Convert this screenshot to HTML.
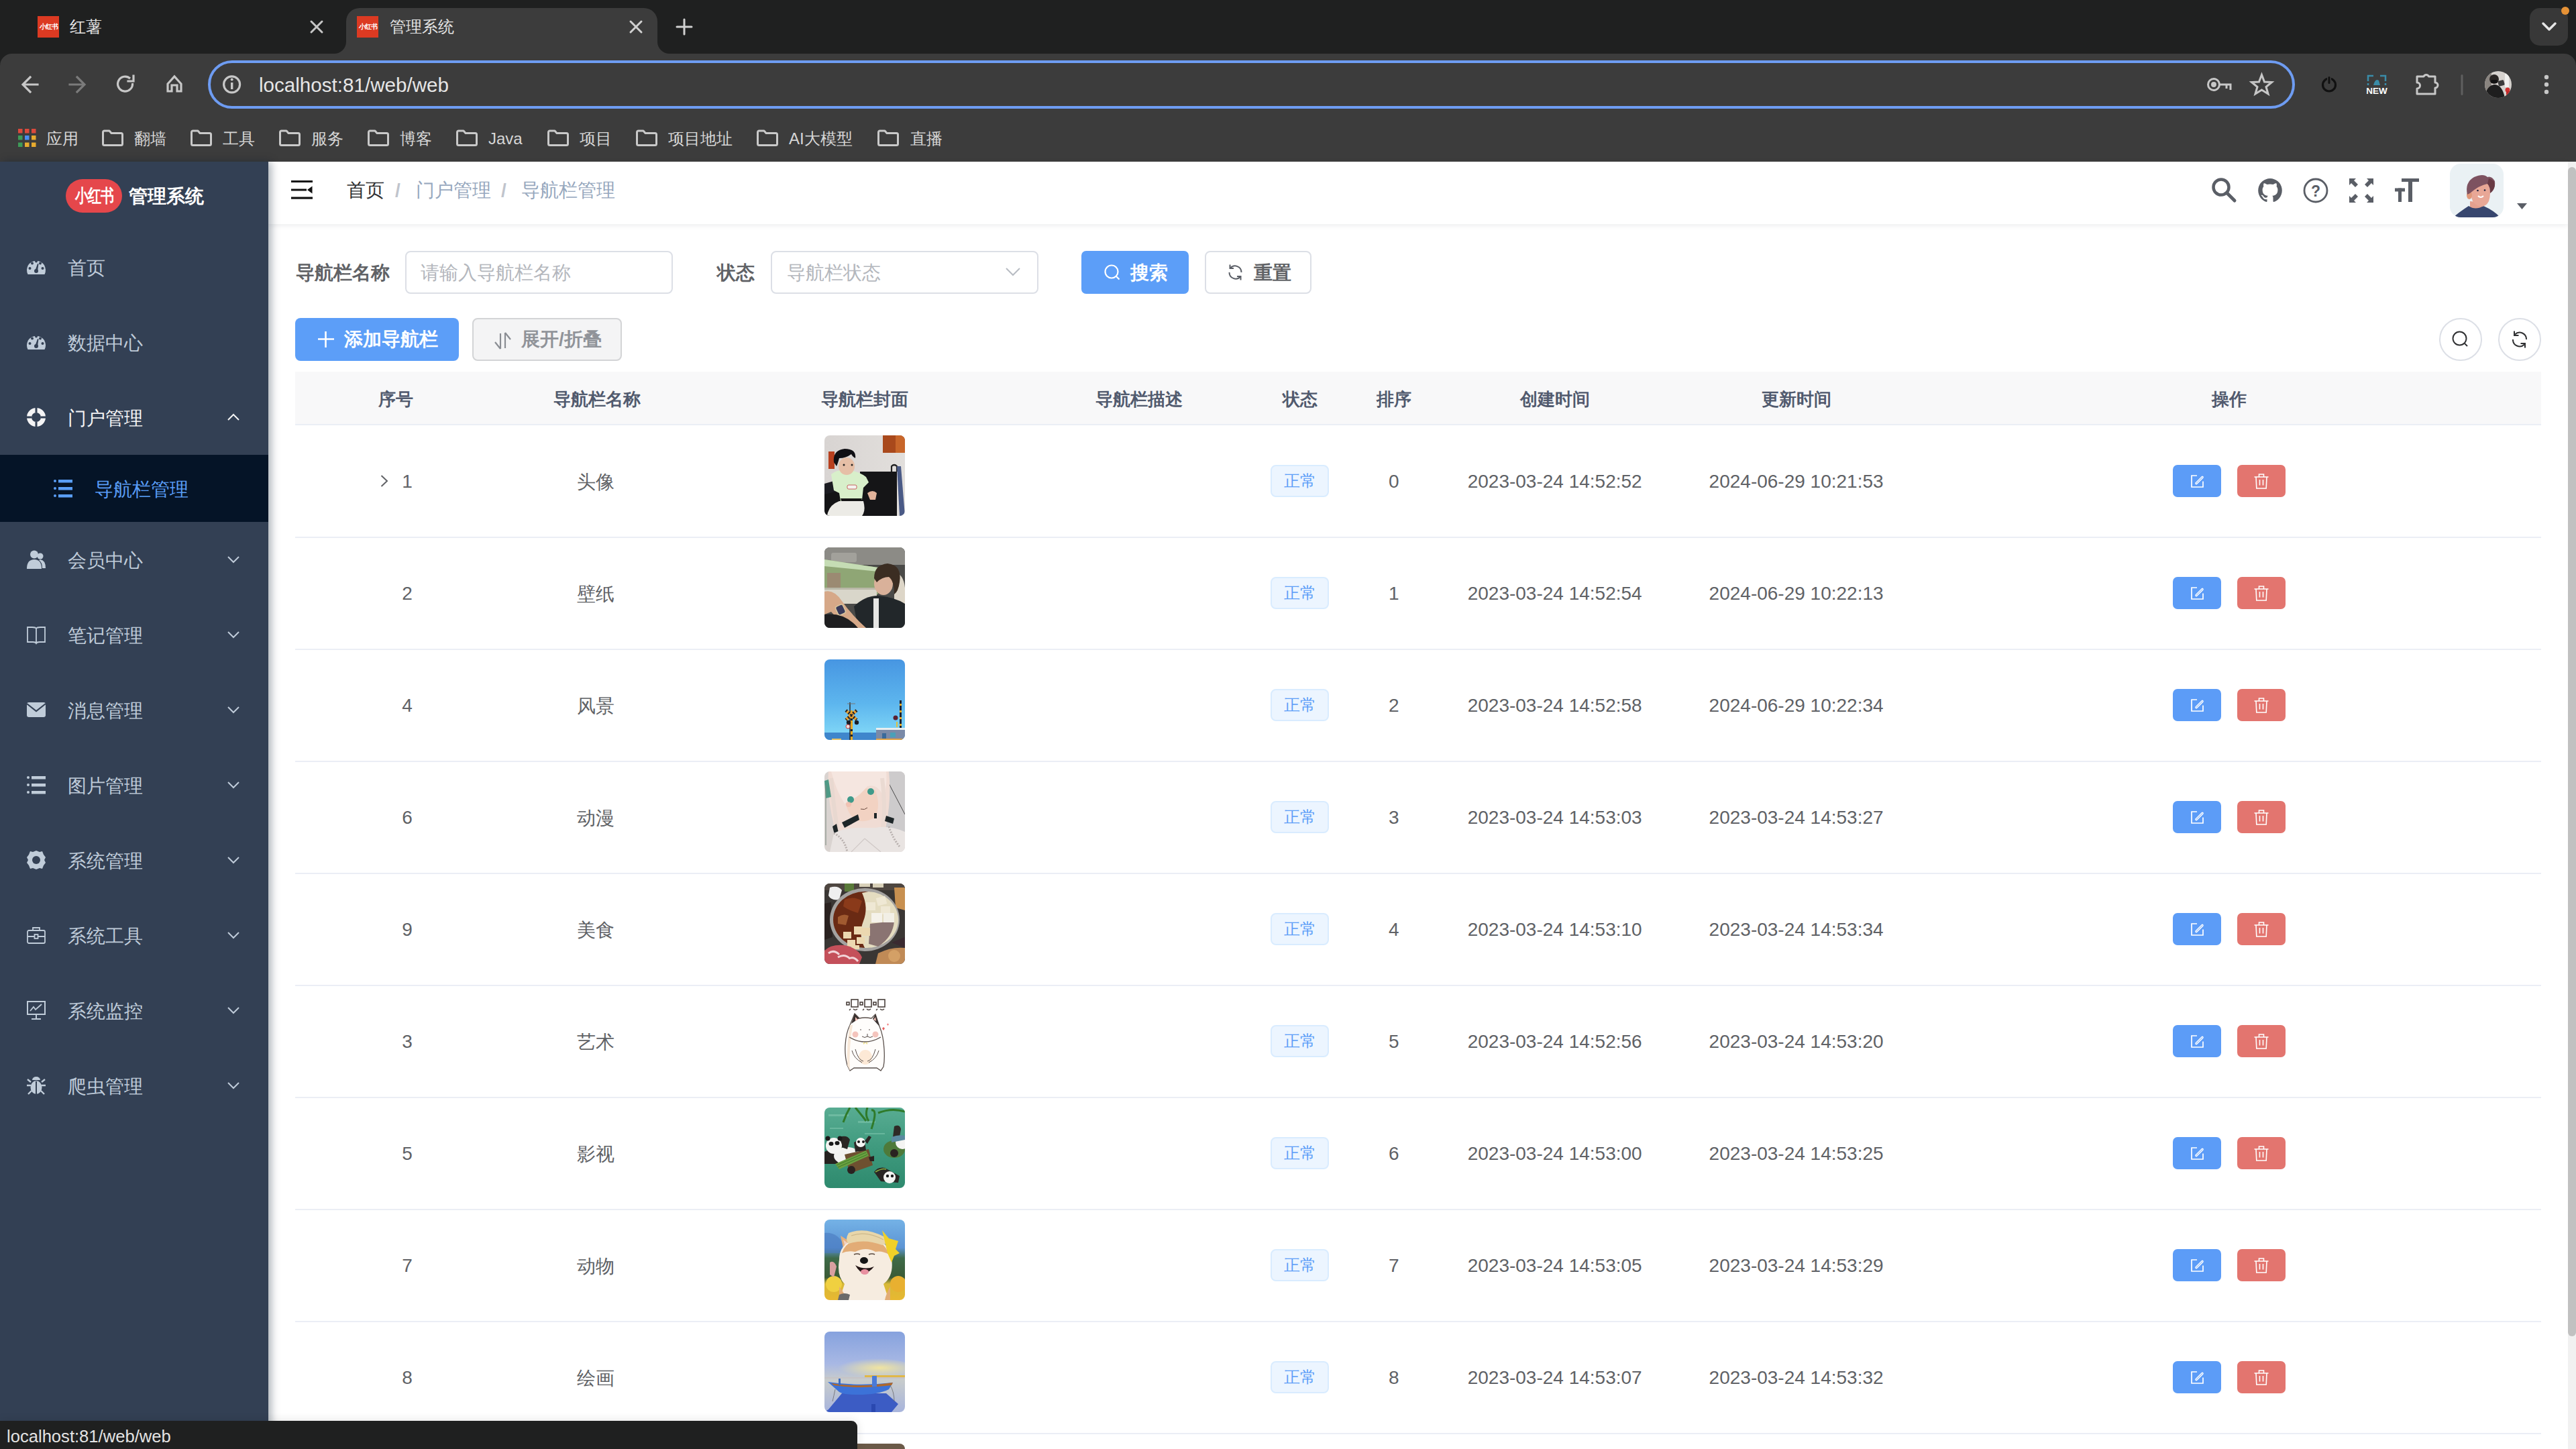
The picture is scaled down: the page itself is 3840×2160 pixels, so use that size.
<!DOCTYPE html>
<html><head><meta charset="utf-8">
<style>
*{box-sizing:border-box;margin:0;padding:0}
html,body{width:3840px;height:2160px;overflow:hidden;background:#fff;font-family:"Liberation Sans",sans-serif}
.a{position:absolute}
.t{position:absolute;white-space:nowrap;line-height:1}
svg{position:absolute;overflow:visible}
/* chrome */
#tabs{left:0;top:0;width:3840px;height:120px;background:#1f2020}
#tool{left:0;top:80px;width:3840px;height:161px;background:#3c3c3c;border-radius:18px 18px 0 0}
.fav{position:absolute;width:32px;height:32px;background:#dc3a22;color:#fff;font-size:10px;font-weight:bold;line-height:32px;text-align:center;letter-spacing:-1px}
.ct{color:#e3e3e3;font-size:24px}
.bm{color:#d6d6d6;font-size:24px;top:194.5px}
/* sidebar */
#side{left:0;top:241px;width:400px;height:1919px;background:#334054;box-shadow:4px 0 12px rgba(0,21,41,.35);z-index:2}
.mi{color:#bfcbd9;font-size:28px}
/* content */
.lbl{font-size:28px;font-weight:bold;color:#606266}
.inp{position:absolute;border:2px solid #dcdfe6;border-radius:8px;background:#fff}
.ph{font-size:28px;color:#b4b7bd}
.th{font-size:26px;font-weight:bold;color:#515a6e}
.td{font-size:28px;color:#606266}
.row{position:absolute;left:440px;width:3348px;height:2px;background:#ebeef5}
.thumb{position:absolute;left:1229px;width:120px;height:120px;border-radius:8px;overflow:hidden}
.tag{position:absolute;left:1894px;width:87px;height:48px;background:#ecf5ff;border:2px solid #d9ecff;border-radius:8px;color:#5b9ef8;font-size:24px;line-height:44px;text-align:center}
.be{position:absolute;left:3239px;width:72px;height:48px;background:#5c9cf7;border-radius:7px}
.bd{position:absolute;left:3335px;width:72px;height:48px;background:#e3756f;border-radius:7px}
</style></head><body>
<!-- ============ BROWSER CHROME ============ -->
<div id="tabs" class="a"></div>
<div id="tool" class="a"></div>

<!-- tab strip -->
<div class="fav" style="left:56px;top:24px">小红书</div>
<div class="t ct" style="left:104px;top:28px">红薯</div>
<svg width="3840" height="80" style="left:0;top:0">
 <g stroke="#c6c6c6" stroke-width="3" stroke-linecap="round">
  <path d="M464,32 L480,48 M480,32 L464,48"/>
 </g>
 <path d="M498,80 A18,18 0 0 0 516,62 V32 A20,20 0 0 1 536,12 H960 A20,20 0 0 1 980,32 V62 A18,18 0 0 0 998,80 Z" fill="#3c3c3c"/>
 <g stroke="#d0d0d0" stroke-width="3" stroke-linecap="round">
  <path d="M940,32 L956,48 M956,32 L940,48"/>
  <path d="M1020,29 V51 M1009,40 H1031"/>
 </g>
 <rect x="3771" y="12" width="57" height="56" rx="15" fill="#383838"/>
 <path d="M3791,35 L3800,44 L3809,35" stroke="#e6e6e6" stroke-width="3.5" fill="none" stroke-linecap="round" stroke-linejoin="round"/>
 <circle cx="3824" cy="16" r="6" fill="#e69236"/>
</svg>
<div class="fav" style="left:532px;top:24px">小红书</div>
<div class="t ct" style="left:581px;top:28px">管理系统</div>
<!-- toolbar -->
<svg width="3840" height="161" style="left:0;top:80px">
 <g stroke="#c7c7c7" stroke-width="3.2" fill="none" stroke-linecap="square">
  <path d="M35,46 H56 M45,35 L34,46 L45,57"/>
 </g>
 <g stroke="#7b7b7b" stroke-width="3.2" fill="none" stroke-linecap="square">
  <path d="M125,46 H104 M115,35 L126,46 L115,57"/>
 </g>
 <g stroke="#c7c7c7" stroke-width="3.2" fill="none">
  <path d="M197.5,44 A11,11 0 1 1 194,37"/>
  <path d="M199,33 V41 H191" stroke-linecap="square"/>
  <path d="M250,56 V45 L260,34 L270,45 V56 H264 V47 H256 V56 Z" stroke-linejoin="miter"/>
  <circle cx="345.6" cy="45.8" r="12"/>
 </g>
 <rect x="344" y="43" width="3.4" height="10" fill="#c7c7c7"/>
 <circle cx="345.7" cy="38.5" r="2" fill="#c7c7c7"/>
 <!-- key -->
 <g stroke="#c7c7c7" stroke-width="3" fill="none">
  <circle cx="3300" cy="46" r="8.5"/>
  <path d="M3308.5,46 H3325 V54 M3319,46 V52"/>
 </g>
 <circle cx="3300" cy="46" r="4" fill="#c7c7c7"/>
 <path d="M3371.5,31.5 L3375.5,42 L3386.5,42.5 L3378,49.5 L3381,60 L3371.5,54 L3362,60 L3365,49.5 L3356.5,42.5 L3367.5,42 Z" stroke="#c7c7c7" stroke-width="3" fill="none" stroke-linejoin="miter"/>
 <!-- power -->
 <circle cx="3472" cy="46.5" r="9.5" stroke="#111" stroke-width="3.2" fill="none"/>
 <rect x="3469" y="33" width="6" height="13" fill="#3c3c3c"/>
 <rect x="3470.5" y="34" width="3" height="11" rx="1.5" fill="#111"/>
 <!-- NEW -->
 <path d="M3530,41 V33 H3538 M3548,33 H3556 V41 M3530,44 V47 M3556,44 V47" stroke="#3a8ca8" stroke-width="2.5" fill="none"/>
 <path d="M3538,47 Q3541,36 3546,40 L3548,47 Z" fill="#3a8ca8"/>
 <text x="3543" y="60" font-family="Liberation Sans" font-weight="bold" font-size="13.5" fill="#fff" text-anchor="middle">NEW</text>
 <!-- puzzle -->
 <path d="M3603,34 H3613 A4,4 0 0 1 3620.5,34 H3630 V43 A4,4 0 0 1 3630,51 V60 H3603 V52 A4.5,4.5 0 0 0 3603,43 Z" stroke="#c7c7c7" stroke-width="3" fill="none" stroke-linejoin="round"/>
 <rect x="3668.5" y="31" width="3" height="31" rx="1.5" fill="#5f5f5f"/>
 <defs><clipPath id="av"><circle cx="3724" cy="46" r="20"/></clipPath></defs>
 <g clip-path="url(#av)"><rect x="3704" y="26" width="40" height="40" fill="#d6d2ce"/><rect x="3704" y="26" width="10" height="40" fill="#8a8580"/><rect x="3734" y="30" width="6" height="20" fill="#f0f0ee"/>
 <path d="M3704,66 Q3706,48 3718,46 Q3730,46 3734,66 Z" fill="#1e1e1e"/><circle cx="3718" cy="38" r="7" fill="#2a2624"/><rect x="3713" y="39" width="10" height="5" rx="2" fill="#111"/>
 <rect x="3724" y="40" width="9" height="8" rx="1.5" fill="#3a3a3a" transform="rotate(-15 3728 44)"/><circle cx="3738" cy="54" r="3.5" fill="#d03030"/><rect x="3736" y="56" width="8" height="10" fill="#c02828"/></g>
 <g fill="#c7c7c7"><circle cx="3796" cy="35" r="3.2"/><circle cx="3796" cy="46" r="3.2"/><circle cx="3796" cy="57" r="3.2"/></g>
</svg>
<div class="a" style="left:310px;top:90px;width:3111px;height:72px;border:4px solid #6e9cf2;border-radius:36px"></div>
<div class="t" style="left:386px;top:112px;font-size:29.6px;color:#e6e6e6">localhost:81/web/web</div>
<!-- bookmarks -->
<svg width="1400" height="40" style="left:0;top:186px">
 <g>
  <rect x="27" y="6" width="6.5" height="6.5" fill="#db4a3c"/><rect x="37" y="6" width="6.5" height="6.5" fill="#db4a3c"/><rect x="47" y="6" width="6.5" height="6.5" fill="#db4a3c"/>
  <rect x="27" y="16" width="6.5" height="6.5" fill="#3e9b58"/><rect x="37" y="16" width="6.5" height="6.5" fill="#4a8df0"/><rect x="47" y="16" width="6.5" height="6.5" fill="#e8ab2e"/>
  <rect x="27" y="26.5" width="6.5" height="6.5" fill="#3e9b58"/><rect x="37" y="26.5" width="6.5" height="6.5" fill="#e8ab2e"/><rect x="47" y="26.5" width="6.5" height="6.5" fill="#e8ab2e"/>
 </g>
 <defs><path id="fd" d="M1.5,8 V3 A2,2 0 0 1 3.5,1 H11 L14,4.5 H28.5 A2,2 0 0 1 30.5,6.5 V20.5 A2,2 0 0 1 28.5,22.5 H3.5 A2,2 0 0 1 1.5,20.5 Z" stroke="#c9c9c9" stroke-width="3" fill="none" stroke-linejoin="round"/></defs>
 <use href="#fd" x="152" y="8"/><use href="#fd" x="284" y="8"/><use href="#fd" x="416" y="8"/><use href="#fd" x="548" y="8"/><use href="#fd" x="680" y="8"/><use href="#fd" x="816" y="8"/><use href="#fd" x="948" y="8"/><use href="#fd" x="1128" y="8"/><use href="#fd" x="1308" y="8"/>
</svg>
<div class="t bm" style="left:69px">应用</div>
<div class="t bm" style="left:200px">翻墙</div>
<div class="t bm" style="left:332px">工具</div>
<div class="t bm" style="left:464px">服务</div>
<div class="t bm" style="left:596px">博客</div>
<div class="t bm" style="left:728px">Java</div>
<div class="t bm" style="left:864px">项目</div>
<div class="t bm" style="left:996px">项目地址</div>
<div class="t bm" style="left:1176px">AI大模型</div>
<div class="t bm" style="left:1357px">直播</div>

<!-- CHROME_END -->
<div id="side" class="a"></div>
<!-- SIDEBAR -->
<div class="a" style="left:98px;top:267px;width:84px;height:50px;background:#e5474b;border-radius:25px;color:#fff;font-weight:bold;font-size:20px;line-height:50px;text-align:center;letter-spacing:-1px;z-index:3"><span style="display:inline-block;transform:scale(1,1.35)">小红书</span></div>
<div class="t" style="left:192px;top:278.5px;font-size:28px;font-weight:bold;color:#fff;z-index:3">管理系统</div>
<div class="t mi" style="left:101px;top:385.5px;color:#bfcbd9;z-index:3">首页</div>
<svg width="28" height="28" style="left:40px;top:384px;z-index:3"><path d="M1.5,25 A14,14 0 1 1 26.5,25 Z" fill="#c0ccd9"/><g fill="#334054"><circle cx="4.5" cy="16" r="2"/><circle cx="8" cy="8.5" r="2"/><circle cx="14" cy="5.5" r="2"/><circle cx="20" cy="8.5" r="2"/><circle cx="23.5" cy="16" r="2"/><path d="M12.5,19 L16,9 L17.5,9.5 L16,20 Z"/><circle cx="14" cy="20" r="3"/></g></svg>
<div class="t mi" style="left:101px;top:497.5px;color:#bfcbd9;z-index:3">数据中心</div>
<svg width="28" height="28" style="left:40px;top:496px;z-index:3"><path d="M1.5,25 A14,14 0 1 1 26.5,25 Z" fill="#c0ccd9"/><g fill="#334054"><circle cx="4.5" cy="16" r="2"/><circle cx="8" cy="8.5" r="2"/><circle cx="14" cy="5.5" r="2"/><circle cx="20" cy="8.5" r="2"/><circle cx="23.5" cy="16" r="2"/><path d="M12.5,19 L16,9 L17.5,9.5 L16,20 Z"/><circle cx="14" cy="20" r="3"/></g></svg>
<div class="t mi" style="left:101px;top:609.5px;color:#f4f4f5;z-index:3">门户管理</div>
<svg width="28" height="28" style="left:40px;top:608px;z-index:3"><circle cx="14" cy="14" r="10.5" stroke="#f4f4f5" stroke-width="7" fill="none"/><g stroke="#334054" stroke-width="3"><path d="M14,0 V7 M14,21 V28 M0,14 H7 M21,14 H28"/></g></svg>
<svg width="18" height="10" style="left:339px;top:617px;z-index:3"><path d="M1,9 L9,1 L17,9" stroke="#f4f4f5" stroke-width="2" fill="none"/></svg>
<div class="t mi" style="left:101px;top:821.5px;color:#bfcbd9;z-index:3">会员中心</div>
<svg width="28" height="28" style="left:40px;top:820px;z-index:3"><circle cx="11" cy="6.5" r="6" fill="#c0ccd9"/><path d="M0,28 Q0,14 11,14 Q22,14 22,28 Z" fill="#c0ccd9"/><circle cx="20" cy="9" r="4.5" fill="#c0ccd9"/><path d="M20,14 Q28,15 28,27 H23 Q23,18 18,15 Z" fill="#c0ccd9"/></svg>
<svg width="18" height="10" style="left:339px;top:829px;z-index:3"><path d="M1,1 L9,9 L17,1" stroke="#bfcbd9" stroke-width="2" fill="none"/></svg>
<div class="t mi" style="left:101px;top:933.5px;color:#bfcbd9;z-index:3">笔记管理</div>
<svg width="28" height="28" style="left:40px;top:932px;z-index:3"><path d="M1,3 H8 Q13,3 14,5 Q15,3 20,3 H27 V25 H19 Q15,25 14,27 Q13,25 9,25 H1 Z M14,5 V27" stroke="#c0ccd9" stroke-width="1.8" fill="none"/></svg>
<svg width="18" height="10" style="left:339px;top:941px;z-index:3"><path d="M1,1 L9,9 L17,1" stroke="#bfcbd9" stroke-width="2" fill="none"/></svg>
<div class="t mi" style="left:101px;top:1045.5px;color:#bfcbd9;z-index:3">消息管理</div>
<svg width="28" height="28" style="left:40px;top:1044px;z-index:3"><rect x="0" y="3" width="28" height="22" rx="3" fill="#c0ccd9"/><path d="M0,5 L14,16 L28,5" stroke="#334054" stroke-width="2.2" fill="none"/></svg>
<svg width="18" height="10" style="left:339px;top:1053px;z-index:3"><path d="M1,1 L9,9 L17,1" stroke="#bfcbd9" stroke-width="2" fill="none"/></svg>
<div class="t mi" style="left:101px;top:1157.5px;color:#bfcbd9;z-index:3">图片管理</div>
<svg width="28" height="28" style="left:40px;top:1156px;z-index:3"><g fill="#c0ccd9"><circle cx="2" cy="3" r="2"/><circle cx="2" cy="14" r="2"/><circle cx="2" cy="25" r="2"/><rect x="7" y="1" width="21" height="4.5"/><rect x="7" y="12" width="21" height="4.5"/><rect x="7" y="23" width="21" height="4.5"/></g></svg>
<svg width="18" height="10" style="left:339px;top:1165px;z-index:3"><path d="M1,1 L9,9 L17,1" stroke="#bfcbd9" stroke-width="2" fill="none"/></svg>
<div class="t mi" style="left:101px;top:1269.5px;color:#bfcbd9;z-index:3">系统管理</div>
<svg width="28" height="28" style="left:40px;top:1268px;z-index:3"><path d="M14,0 L19,2 L23,1 L25,6 L28,10 L26,14 L28,18 L25,22 L23,27 L19,26 L14,28 L9,26 L5,27 L3,22 L0,18 L2,14 L0,10 L3,6 L5,1 L9,2 Z" fill="#c0ccd9"/><circle cx="14" cy="14" r="6" fill="#334054"/></svg>
<svg width="18" height="10" style="left:339px;top:1277px;z-index:3"><path d="M1,1 L9,9 L17,1" stroke="#bfcbd9" stroke-width="2" fill="none"/></svg>
<div class="t mi" style="left:101px;top:1381.5px;color:#bfcbd9;z-index:3">系统工具</div>
<svg width="28" height="28" style="left:40px;top:1380px;z-index:3"><rect x="1" y="7" width="26" height="19" rx="2" stroke="#c0ccd9" stroke-width="1.8" fill="none"/><path d="M9,7 V3 H19 V7 M1,16 H27" stroke="#c0ccd9" stroke-width="1.8" fill="none"/><rect x="11.5" y="13" width="5" height="6" stroke="#c0ccd9" stroke-width="1.8" fill="#334054"/></svg>
<svg width="18" height="10" style="left:339px;top:1389px;z-index:3"><path d="M1,1 L9,9 L17,1" stroke="#bfcbd9" stroke-width="2" fill="none"/></svg>
<div class="t mi" style="left:101px;top:1493.5px;color:#bfcbd9;z-index:3">系统监控</div>
<svg width="28" height="28" style="left:40px;top:1492px;z-index:3"><path d="M1,1 H27 V20 H1 Z M14,20 V26 M7,27 H21" stroke="#c0ccd9" stroke-width="2" fill="none"/><path d="M5,15 L10,9 L13,13 L22,5" stroke="#c0ccd9" stroke-width="1.8" fill="none"/></svg>
<svg width="18" height="10" style="left:339px;top:1501px;z-index:3"><path d="M1,1 L9,9 L17,1" stroke="#bfcbd9" stroke-width="2" fill="none"/></svg>
<div class="t mi" style="left:101px;top:1605.5px;color:#bfcbd9;z-index:3">爬虫管理</div>
<svg width="28" height="28" style="left:40px;top:1604px;z-index:3"><ellipse cx="14" cy="17" rx="8.5" ry="10" fill="#c0ccd9"/><path d="M8,6 A6,5 0 0 1 20,6 Z" fill="#c0ccd9"/><g stroke="#c0ccd9" stroke-width="2.4"><path d="M0,14 H6 M22,14 H28 M1,5 L6,9 M27,5 L22,9 M2,27 L7,22 M26,27 L21,22"/></g><path d="M14,8 V28" stroke="#334054" stroke-width="2"/></svg>
<svg width="18" height="10" style="left:339px;top:1613px;z-index:3"><path d="M1,1 L9,9 L17,1" stroke="#bfcbd9" stroke-width="2" fill="none"/></svg>
<div class="a" style="left:0;top:678px;width:400px;height:100px;background:#051427;z-index:3"></div>
<svg width="28" height="28" style="left:80px;top:714px;z-index:3"><g fill="#5a9ef7"><circle cx="2" cy="3" r="2"/><circle cx="2" cy="14" r="2"/><circle cx="2" cy="25" r="2"/><rect x="7" y="1" width="21" height="4.5"/><rect x="7" y="12" width="21" height="4.5"/><rect x="7" y="23" width="21" height="4.5"/></g></svg>
<div class="t mi" style="left:141px;top:715.5px;color:#5a9ef7;z-index:3">导航栏管理</div>
<!-- SIDEBAR_END -->

<!-- NAVBAR -->
<div class="a" style="left:400px;top:241px;width:3428px;height:93px;background:#fff;box-shadow:0 2px 8px rgba(0,21,41,.08);z-index:1"></div>
<svg width="34" height="30" style="left:434px;top:268px;z-index:1">
 <rect x="0" y="1" width="32" height="3" fill="#111"/><rect x="0" y="13.5" width="23" height="3" fill="#111"/><rect x="0" y="25.5" width="32" height="3.2" fill="#111"/>
 <path d="M24,15 L31.5,9.5 V20.5 Z" fill="#111"/>
</svg>
<div class="t" style="left:517px;top:270px;font-size:28px;color:#303133;z-index:1">首页</div>
<div class="t" style="left:589px;top:270px;font-size:28px;color:#c0c4cc;font-weight:bold;z-index:1">/</div>
<div class="t" style="left:620px;top:270px;font-size:28px;color:#97a8be;z-index:1">门户管理</div>
<div class="t" style="left:747px;top:270px;font-size:28px;color:#c0c4cc;font-weight:bold;z-index:1">/</div>
<div class="t" style="left:777px;top:270px;font-size:28px;color:#97a8be;z-index:1">导航栏管理</div>
<svg width="320" height="40" style="left:3296px;top:264px;z-index:1">
 <g stroke="#5a5e66" fill="none">
  <circle cx="15" cy="15" r="11.5" stroke-width="4.5"/>
  <path d="M23.5,23.5 L35,35" stroke-width="5" stroke-linecap="round"/>
  <circle cx="156" cy="20" r="17" stroke-width="2.8"/>
 </g>
 <path d="M88,2 A18,18 0 0 0 82.3,37 C83.2,37.2 83.5,36.6 83.5,36.1 V33 C78.5,34 77.4,30.6 77.4,30.6 C76.6,28.5 75.4,27.9 75.4,27.9 C73.7,26.8 75.5,26.8 75.5,26.8 C77.3,26.9 78.3,28.7 78.3,28.7 C79.9,31.5 82.6,30.7 83.6,30.2 C83.8,29 84.3,28.2 84.8,27.8 C80.8,27.3 76.6,25.8 76.6,18.9 C76.6,16.9 77.3,15.3 78.4,14 C78.3,13.6 77.6,11.7 78.6,9.3 C78.6,9.3 80.1,8.8 83.6,11.1 A17,17 0 0 1 92.4,11.1 C95.9,8.8 97.4,9.3 97.4,9.3 C98.4,11.7 97.7,13.6 97.6,14 C98.7,15.3 99.4,16.9 99.4,18.9 C99.4,25.8 95.2,27.3 91.2,27.8 C91.9,28.4 92.5,29.5 92.5,31.2 V36.1 C92.5,36.6 92.8,37.2 93.7,37 A18,18 0 0 0 88,2 Z" fill="#5a5e66"/>
 <text x="156" y="28.5" font-family="Liberation Sans" font-weight="bold" font-size="23" fill="#5a5e66" text-anchor="middle">?</text>
 <g fill="#5a5e66">
  <path d="M206,2 H216 L213,5 L219,11 L215,15 L209,9 L206,12 Z"/>
  <path d="M242,2 H232 L235,5 L229,11 L233,15 L239,9 L242,12 Z"/>
  <path d="M206,38 H216 L213,35 L219,29 L215,25 L209,31 L206,28 Z"/>
  <path d="M242,38 H232 L235,35 L229,29 L233,25 L239,31 L242,28 Z"/>
  <rect x="284" y="2" width="26" height="5"/><rect x="294" y="2" width="6" height="35"/>
  <rect x="274" y="16.5" width="15" height="5"/><rect x="279" y="16.5" width="5" height="20.5"/>
 </g>
</svg>
<!-- avatar -->
<div class="a" style="left:3652px;top:244px;width:80px;height:80px;border-radius:16px;background:#eaf1f4;overflow:hidden;z-index:1">
 <svg width="80" height="80" style="left:0;top:0">
  <path d="M30,56 L48,58 L50,68 Q40,74 30,68 Z" fill="#e4a08e"/>
  <path d="M5,80 Q14,72 28,63 Q38,70 50,63 Q66,70 75,80 Z" fill="#37466e"/>
  <path d="M32,34 Q44,22 58,30 Q62,44 58,56 Q54,64 46,64 Q38,62 34,56 Q30,46 32,34 Z" fill="#e8a796"/>
  <ellipse cx="29" cy="47" rx="4" ry="6" fill="#e0987a"/>
  <path d="M26,46 Q22,28 36,20 Q50,14 56,20 Q62,18 67,26 Q68,34 64,40 L61,42 Q60,32 56,30 Q44,32 30,44 Z" fill="#7d5260"/>
  <path d="M58,22 Q67,24 67,32 Q66,40 60,44 Q60,34 56,30 Z" fill="#683a44"/>
  <circle cx="41.5" cy="40" r="1.3" fill="#1a2040"/><circle cx="52" cy="39.5" r="1.3" fill="#1a2040"/>
  <path d="M42,48 Q46,52 50,48" stroke="#fff" stroke-width="2" fill="none"/>
 </svg>
</div>
<svg width="16" height="10" style="left:3752px;top:302px;z-index:1"><path d="M0,1 H15 L7.5,10 Z" fill="#5a5e66"/></svg>
<!-- scrollbar -->
<div class="a" style="left:3828px;top:241px;width:12px;height:1919px;background:#f1f1f1;z-index:1"></div>
<div class="a" style="left:3828px;top:249px;width:12px;height:1743px;background:#c1c1c1;border-radius:6px;z-index:1"></div>
<!-- SEARCH FORM -->
<div class="t lbl" style="left:441px;top:393px">导航栏名称</div>
<div class="inp" style="left:604px;top:374px;width:399px;height:64px"></div>
<div class="t ph" style="left:627px;top:393px">请输入导航栏名称</div>
<div class="t lbl" style="left:1069px;top:393px">状态</div>
<div class="inp" style="left:1149px;top:374px;width:399px;height:64px"></div>
<div class="t ph" style="left:1173px;top:393px">导航栏状态</div>
<svg width="22" height="14" style="left:1499px;top:399px"><path d="M1,1 L11,11 L21,1" stroke="#b8bcc3" stroke-width="2" fill="none"/></svg>
<div class="a" style="left:1612px;top:374px;width:160px;height:64px;background:#5c9ef8;border-radius:7px"></div>
<svg width="26" height="26" style="left:1646px;top:394px"><circle cx="11" cy="11" r="9.5" stroke="#fff" stroke-width="2.2" fill="none"/><path d="M18,18 L22.5,22.5" stroke="#fff" stroke-width="2.2"/></svg>
<div class="t" style="left:1685px;top:393px;font-size:28px;font-weight:bold;color:#fff">搜索</div>
<div class="inp" style="left:1796px;top:374px;width:159px;height:64px;border-color:#dcdfe6"></div>
<svg width="26" height="26" style="left:1830px;top:394px"><g transform="translate(23,0) scale(-1,1)"><path d="M2.5,12 A9.5,9.5 0 0 1 19,5.5 M20.5,12 A9.5,9.5 0 0 1 4,18.5" stroke="#5a5e66" stroke-width="2" fill="none"/><path d="M19.5,0.5 V6 H14 M3.5,23.5 V18 H9" stroke="#5a5e66" stroke-width="2" fill="none"/></g></svg>
<div class="t" style="left:1869px;top:393px;font-size:28px;font-weight:bold;color:#606266">重置</div>
<!-- TOOLBAR BUTTONS -->
<div class="a" style="left:440px;top:474px;width:244px;height:64px;background:#5c9ef8;border-radius:8px"></div>
<svg width="24" height="24" style="left:474px;top:494px"><path d="M11.5,0 V24 M0,11.5 H24" stroke="#fff" stroke-width="2.6"/></svg>
<div class="t" style="left:513px;top:492px;font-size:28px;font-weight:bold;color:#fff">添加导航栏</div>
<div class="a" style="left:704px;top:474px;width:223px;height:64px;background:#f4f4f5;border:2px solid #d3d4d6;border-radius:8px"></div>
<svg width="26" height="26" style="left:737px;top:495px"><path d="M9,25 V2 M9,25 L1,15 M16,1 V24 M16,1 L24,11" stroke="#8a8d93" stroke-width="2.2" fill="none"/></svg>
<div class="t" style="left:777px;top:492px;font-size:28px;font-weight:bold;color:#909399">展开/折叠</div>
<div class="a" style="left:3636px;top:474px;width:64px;height:64px;border:2px solid #dcdfe6;border-radius:32px"></div>
<svg width="26" height="26" style="left:3655px;top:493px"><circle cx="11.5" cy="11.5" r="10" stroke="#303133" stroke-width="2" fill="none"/><path d="M19,19 L23,23" stroke="#303133" stroke-width="2"/></svg>
<div class="a" style="left:3724px;top:474px;width:64px;height:64px;border:2px solid #dcdfe6;border-radius:32px"></div>
<svg width="26" height="26" style="left:3743px;top:493px"><g transform="translate(26,0) scale(-1,1)"><path d="M3,13 A10,10 0 0 1 20,5.5 M23,13 A10,10 0 0 1 6,20.5" stroke="#303133" stroke-width="2" fill="none"/><path d="M21,0.5 V7 H14.5 M5,25.5 V19 H11.5" stroke="#303133" stroke-width="2" fill="none"/></g></svg>
<!-- TABLE HEADER -->
<div class="a" style="left:440px;top:554px;width:3348px;height:79px;background:#f8f8f9"></div>
<div class="row" style="top:632px"></div>
<div class="t th" style="left:290px;width:600px;text-align:center;top:581.5px">序号</div>
<div class="t th" style="left:590px;width:600px;text-align:center;top:581.5px">导航栏名称</div>
<div class="t th" style="left:989px;width:600px;text-align:center;top:581.5px">导航栏封面</div>
<div class="t th" style="left:1397.5px;width:600px;text-align:center;top:581.5px">导航栏描述</div>
<div class="t th" style="left:1638px;width:600px;text-align:center;top:581.5px">状态</div>
<div class="t th" style="left:1777.6999999999998px;width:600px;text-align:center;top:581.5px">排序</div>
<div class="t th" style="left:2017.6999999999998px;width:600px;text-align:center;top:581.5px">创建时间</div>
<div class="t th" style="left:2377.6px;width:600px;text-align:center;top:581.5px">更新时间</div>
<div class="t th" style="left:3023px;width:600px;text-align:center;top:581.5px">操作</div>

<!-- HEADER_END -->
<!-- TABLE ROWS -->
<div class="row" style="top:799.6px"></div>
<svg width="12" height="18" style="left:567px;top:708px"><path d="M1.5,1 L10,9 L1.5,17" stroke="#606266" stroke-width="2" fill="none"/></svg>
<div class="t td" style="left:507px;width:200px;text-align:center;top:704px">1</div>
<div class="t td" style="left:588px;width:600px;text-align:center;top:704.5px">头像</div>
<div class="thumb" style="top:649.4px"><svg width="120" height="120" style="left:0;top:0"><defs><linearGradient id="w1" x1="0" y1="0" x2="1" y2="0"><stop offset="0" stop-color="#d8d4d2"/><stop offset="1" stop-color="#e2dfdc"/></linearGradient></defs>
<rect width="120" height="120" fill="url(#w1)"/><rect x="87" y="0" width="33" height="26" fill="#a9491c"/><rect x="106" y="0" width="14" height="26" fill="#c8662a"/>
<rect x="6" y="24" width="9" height="26" fill="#b8401f"/>
<path d="M53,54 H108 V120 H53 Z" fill="#151517"/><path d="M0,80 H60 V120 H0 Z" fill="#141416"/>
<path d="M100,54 V46 Q104,42 108,46 V54" stroke="#222" stroke-width="2.2" fill="none"/>
<path d="M108,46 L114,46 L120,120 H112 Z" fill="#4a5a86"/>
<path d="M0,72 L14,68 L16,84 L0,88 Z" fill="#1c1c22"/>
<path d="M10,58 Q20,50 36,52 Q52,54 62,62 L66,70 L58,78 L56,96 L24,98 L22,86 L14,82 Z" fill="#d8efca"/>
<rect x="34" y="74" width="14" height="6" rx="2" fill="#f4f4f0" stroke="#c04040" stroke-width="0.8"/>
<path d="M24,94 H56 L54,100 H26 Z" fill="#151515"/>
<path d="M22,98 H58 Q62,112 56,120 H4 Q6,104 22,98 Z" fill="#ecebe6"/>
<path d="M64,86 Q72,80 78,86 L76,96 L68,96 Z" fill="#e2b29a"/>
<ellipse cx="33" cy="46" rx="12" ry="13" fill="#e6bfa6"/>
<path d="M14,40 Q12,22 30,20 Q48,20 46,34 Q42,32 40,28 Q32,34 22,34 Q20,42 18,46 Z" fill="#101014"/>
<circle cx="29" cy="44" r="1.5" fill="#222"/><circle cx="41" cy="44" r="1.5" fill="#222"/></svg></div>
<div class="tag" style="top:693px">正常</div>
<div class="t td" style="left:1977.7px;width:200px;text-align:center;top:704px">0</div>
<div class="t td" style="left:2017.7px;width:600px;text-align:center;top:704px">2023-03-24 14:52:52</div>
<div class="t td" style="left:2377.6px;width:600px;text-align:center;top:704px">2024-06-29 10:21:53</div>
<div class="be" style="top:693px"><svg width="20" height="20" style="left:27px;top:14.5px"><path d="M9,1 H1 V18 H18 V9.5" stroke="#fff" stroke-width="1.7" fill="none"/><path d="M8,12.5 L17,3.5" stroke="#fff" stroke-width="3.6" stroke-linecap="round"/><path d="M8,12.5 L17,3.5" stroke="#5c9cf7" stroke-width="1" stroke-linecap="round"/></svg></div>
<div class="bd" style="top:693px"><svg width="22" height="24" style="left:25px;top:13px"><path d="M0.5,5 H21.5 M7.5,4.5 V1 H14.5 V4.5 M3,5 L3.8,22 H18.2 L19,5 M8.5,9 V17.5 M13.5,9 V17.5" stroke="#fff" stroke-width="1.6" fill="none"/></svg></div>
<div class="row" style="top:966.6px"></div>
<div class="t td" style="left:507px;width:200px;text-align:center;top:871px">2</div>
<div class="t td" style="left:588px;width:600px;text-align:center;top:871.5px">壁纸</div>
<div class="thumb" style="top:816.4px"><svg width="120" height="120" style="left:0;top:0"><rect width="120" height="120" fill="#4a4a48"/><rect x="0" y="0" width="120" height="26" fill="#8c8b86"/><rect x="10" y="8" width="38" height="14" rx="3" fill="#a2a19b"/>
<path d="M0,18 L80,30 V70 H0 Z" fill="#8fa675"/><path d="M0,18 L80,30 V36 L0,28 Z" fill="#c5dcb4"/><rect x="4" y="38" width="20" height="22" fill="#9b8a72"/>
<path d="M0,60 H78 V84 H0 Z" fill="#d9d6ca"/><path d="M0,60 H78 V63 H0 Z" fill="#b9b8a8"/>
<path d="M104,36 Q118,40 120,60 V84 H104 Z" fill="#ddd6c8"/>
<path d="M44,88 Q60,72 80,72 Q104,74 120,84 V120 H50 Z" fill="#22272a"/><rect x="73" y="76" width="8" height="44" fill="#e6e6e4"/>
<ellipse cx="88" cy="54" rx="14" ry="17" fill="#d9b19a"/><path d="M74,46 Q74,26 94,24 Q116,26 112,52 Q110,66 104,70 Q104,50 96,44 Q86,44 78,52 Z" fill="#3b2d22"/>
<path d="M0,66 Q14,62 26,80 Q40,100 62,120 H40 Q20,108 10,96 L0,100 Z" fill="#d6a888"/><rect x="18" y="86" width="12" height="14" rx="3" fill="#3a3a5a" stroke="#d8c8a0" stroke-width="1.5" transform="rotate(-25 24 93)"/>
<path d="M0,100 Q30,96 50,120 H0 Z" fill="#1e1e20"/></svg></div>
<div class="tag" style="top:860px">正常</div>
<div class="t td" style="left:1977.7px;width:200px;text-align:center;top:871px">1</div>
<div class="t td" style="left:2017.7px;width:600px;text-align:center;top:871px">2023-03-24 14:52:54</div>
<div class="t td" style="left:2377.6px;width:600px;text-align:center;top:871px">2024-06-29 10:22:13</div>
<div class="be" style="top:860px"><svg width="20" height="20" style="left:27px;top:14.5px"><path d="M9,1 H1 V18 H18 V9.5" stroke="#fff" stroke-width="1.7" fill="none"/><path d="M8,12.5 L17,3.5" stroke="#fff" stroke-width="3.6" stroke-linecap="round"/><path d="M8,12.5 L17,3.5" stroke="#5c9cf7" stroke-width="1" stroke-linecap="round"/></svg></div>
<div class="bd" style="top:860px"><svg width="22" height="24" style="left:25px;top:13px"><path d="M0.5,5 H21.5 M7.5,4.5 V1 H14.5 V4.5 M3,5 L3.8,22 H18.2 L19,5 M8.5,9 V17.5 M13.5,9 V17.5" stroke="#fff" stroke-width="1.6" fill="none"/></svg></div>
<div class="row" style="top:1133.6px"></div>
<div class="t td" style="left:507px;width:200px;text-align:center;top:1038px">4</div>
<div class="t td" style="left:588px;width:600px;text-align:center;top:1038.5px">风景</div>
<div class="thumb" style="top:983.4px"><svg width="120" height="120" style="left:0;top:0"><defs><linearGradient id="g3" x1="0" y1="0" x2="0" y2="1"><stop offset="0" stop-color="#4796e2"/><stop offset=".55" stop-color="#5db6ee"/><stop offset="1" stop-color="#86dcf8"/></linearGradient></defs>
<rect width="120" height="120" fill="url(#g3)"/><rect x="0" y="109" width="120" height="11" fill="#3f86cc"/>
<path d="M38,64 V120" stroke="#2a2a2a" stroke-width="1.5"/><path d="M34,66 H46" stroke="#777" stroke-width="1"/><rect x="39" y="76" width="3" height="44" fill="#e8a820"/><rect x="39" y="80" width="3" height="3" fill="#222"/><rect x="39" y="88" width="3" height="3" fill="#222"/><rect x="39" y="104" width="3" height="3" fill="#222"/><rect x="39" y="112" width="3" height="3" fill="#222"/>
<path d="M32,76 L48,90 M48,76 L32,90" stroke="#e8a030" stroke-width="4.5"/><path d="M32,76 L48,90 M48,76 L32,90" stroke="#1a2030" stroke-width="4.5" stroke-dasharray="2 3"/>
<circle cx="36" cy="94" r="3.2" fill="#1a1e28"/><circle cx="48" cy="94" r="3.2" fill="#1a1e28"/><circle cx="35" cy="100" r="3" fill="#f0e0e0" stroke="#c84040" stroke-width="1"/>
<rect x="112" y="61" width="3" height="59" fill="#1a2030"/><rect x="112" y="66" width="3" height="3" fill="#e8a820"/><rect x="112" y="76" width="3" height="3" fill="#e8a820"/><rect x="112" y="86" width="3" height="3" fill="#e8a820"/><rect x="112" y="96" width="3" height="3" fill="#e8a820"/><rect x="112" y="106" width="3" height="3" fill="#e8a820"/>
<circle cx="106" cy="87" r="3.5" fill="#5a2030"/><rect x="107" y="93" width="2" height="8" fill="#e0c040"/>
<rect x="77" y="103" width="43" height="17" fill="#7a8aa8"/><rect x="77" y="102" width="43" height="3" fill="#e8eef0"/><rect x="86" y="110" width="6" height="10" fill="#3a6a9a"/><rect x="98" y="109" width="8" height="7" fill="#4aa0b8"/><rect x="77" y="118" width="43" height="2" fill="#e0a040"/>
<rect x="11" y="118" width="14" height="2" fill="#e8c060"/></svg></div>
<div class="tag" style="top:1027px">正常</div>
<div class="t td" style="left:1977.7px;width:200px;text-align:center;top:1038px">2</div>
<div class="t td" style="left:2017.7px;width:600px;text-align:center;top:1038px">2023-03-24 14:52:58</div>
<div class="t td" style="left:2377.6px;width:600px;text-align:center;top:1038px">2024-06-29 10:22:34</div>
<div class="be" style="top:1027px"><svg width="20" height="20" style="left:27px;top:14.5px"><path d="M9,1 H1 V18 H18 V9.5" stroke="#fff" stroke-width="1.7" fill="none"/><path d="M8,12.5 L17,3.5" stroke="#fff" stroke-width="3.6" stroke-linecap="round"/><path d="M8,12.5 L17,3.5" stroke="#5c9cf7" stroke-width="1" stroke-linecap="round"/></svg></div>
<div class="bd" style="top:1027px"><svg width="22" height="24" style="left:25px;top:13px"><path d="M0.5,5 H21.5 M7.5,4.5 V1 H14.5 V4.5 M3,5 L3.8,22 H18.2 L19,5 M8.5,9 V17.5 M13.5,9 V17.5" stroke="#fff" stroke-width="1.6" fill="none"/></svg></div>
<div class="row" style="top:1300.6px"></div>
<div class="t td" style="left:507px;width:200px;text-align:center;top:1205px">6</div>
<div class="t td" style="left:588px;width:600px;text-align:center;top:1205.5px">动漫</div>
<div class="thumb" style="top:1150.4px"><svg width="120" height="120" style="left:0;top:0"><rect width="120" height="120" fill="#d9d3d0"/><rect x="92" y="0" width="28" height="90" fill="#cdcbcc"/><path d="M96,18 L120,64" stroke="#4a4a4a" stroke-width="1"/>
<path d="M6,0 H96 Q100,40 92,80 L80,120 H20 L14,80 Q4,40 6,0 Z" fill="#f0dcd4"/>
<path d="M30,30 Q50,20 76,28 Q84,50 76,68 Q60,78 46,72 Q30,60 30,30 Z" fill="#f2d2c2"/>
<path d="M10,0 H92 Q94,20 88,38 Q80,18 64,22 Q50,40 30,48 Q18,30 10,0 Z" fill="#f5e6e0"/>
<path d="M10,10 Q14,60 22,100" stroke="#e8d8d0" stroke-width="6" fill="none"/><path d="M86,10 Q92,60 86,90" stroke="#eadad2" stroke-width="6" fill="none"/>
<ellipse cx="39" cy="42" rx="5" ry="5" fill="#3f9a8a"/><ellipse cx="69" cy="30" rx="5" ry="5" fill="#3f9a8a"/><circle cx="36" cy="49" r="4" fill="#f0b8a8" opacity=".6"/>
<path d="M54,56 Q60,58 64,54" stroke="#6a4a40" stroke-width="1" fill="none"/>
<path d="M26,76 L50,64 L52,72 L30,84 Z" fill="#1e2628"/><path d="M12,82 L18,78 L22,96 L16,98 Z" fill="#1e2628"/><path d="M92,66 L104,70 L102,78 L90,74 Z" fill="#1e2628"/><path d="M74,62 L78,62 L78,70 L74,70 Z" fill="#1e2628"/>
<path d="M8,120 L14,92 Q30,84 50,84 H76 Q96,80 120,90 V120 Z" fill="#e9e4e2"/><path d="M14,92 Q30,100 34,120 M96,82 Q102,100 112,112" stroke="#b8b0ae" stroke-width="3" fill="none" stroke-dasharray="2 2"/>
<path d="M60,100 L40,120 M60,100 L84,120" stroke="#cfc8c6" stroke-width="1.2"/>
<path d="M0,14 L6,12 L10,38 L2,40 Z" fill="#4f9a86"/><path d="M2,20 V110" stroke="#7a8a80" stroke-width="1"/></svg></div>
<div class="tag" style="top:1194px">正常</div>
<div class="t td" style="left:1977.7px;width:200px;text-align:center;top:1205px">3</div>
<div class="t td" style="left:2017.7px;width:600px;text-align:center;top:1205px">2023-03-24 14:53:03</div>
<div class="t td" style="left:2377.6px;width:600px;text-align:center;top:1205px">2023-03-24 14:53:27</div>
<div class="be" style="top:1194px"><svg width="20" height="20" style="left:27px;top:14.5px"><path d="M9,1 H1 V18 H18 V9.5" stroke="#fff" stroke-width="1.7" fill="none"/><path d="M8,12.5 L17,3.5" stroke="#fff" stroke-width="3.6" stroke-linecap="round"/><path d="M8,12.5 L17,3.5" stroke="#5c9cf7" stroke-width="1" stroke-linecap="round"/></svg></div>
<div class="bd" style="top:1194px"><svg width="22" height="24" style="left:25px;top:13px"><path d="M0.5,5 H21.5 M7.5,4.5 V1 H14.5 V4.5 M3,5 L3.8,22 H18.2 L19,5 M8.5,9 V17.5 M13.5,9 V17.5" stroke="#fff" stroke-width="1.6" fill="none"/></svg></div>
<div class="row" style="top:1467.6px"></div>
<div class="t td" style="left:507px;width:200px;text-align:center;top:1372px">9</div>
<div class="t td" style="left:588px;width:600px;text-align:center;top:1372.5px">美食</div>
<div class="thumb" style="top:1317.4px"><svg width="120" height="120" style="left:0;top:0"><rect width="120" height="120" fill="#3a3634"/><rect x="0" y="0" width="120" height="10" fill="#4e4640"/><path d="M8,6 Q20,2 26,10 L22,24 Q10,26 6,18 Z" fill="#efefef"/><rect x="30" y="0" width="14" height="12" fill="#5a7a3a"/><rect x="52" y="0" width="16" height="5" fill="#d8d0b8"/><rect x="72" y="0" width="16" height="6" fill="#d8d0b8"/>
<path d="M104,6 L120,6 V40 L106,36 Z" fill="#c89050"/><path d="M0,30 L10,28 L12,80 L0,84 Z" fill="#2a2220"/>
<ellipse cx="60" cy="54" rx="52" ry="47" fill="#a4a2a0"/><ellipse cx="60" cy="54" rx="47" ry="42" fill="#6a2a14"/>
<path d="M66,12 A47,42 0 0 1 60,96 Q50,76 58,56 Q66,36 56,14 Z" fill="#e4dcc0"/><path d="M68,60 L104,56 Q102,80 80,94 L66,90 Z" fill="#8a7472"/>
<g fill="#efe8d4"><rect x="62" y="28" width="14" height="12"/><rect x="78" y="20" width="14" height="12" transform="rotate(-15 85 26)"/><rect x="84" y="34" width="14" height="12"/><rect x="70" y="44" width="16" height="14" fill="#f5f2ea"/><rect x="88" y="44" width="16" height="14" fill="#f2efe6"/></g>
<path d="M30,24 Q44,18 56,26 L50,44 Q36,40 28,34 Z" fill="#8a3a1a"/><path d="M20,50 Q28,44 36,48 L32,62 L20,60 Z" fill="#a05a30"/>
<g fill="#ecd8b0"><rect x="44" y="64" width="12" height="12"/><rect x="56" y="66" width="12" height="12"/><rect x="28" y="72" width="12" height="10"/><rect x="34" y="84" width="12" height="10"/><rect x="48" y="80" width="12" height="10"/><rect x="40" y="92" width="12" height="6"/></g>
<path d="M0,100 Q10,90 30,92 Q50,96 56,110 L52,120 H0 Z" fill="#c4505a"/><path d="M6,104 Q14,98 22,106 M20,110 Q30,104 38,112 M36,112 Q44,108 50,116" stroke="#f2d4d8" stroke-width="3" fill="none"/>
<path d="M80,104 Q100,94 120,96 V120 H76 Z" fill="#c08a56"/><circle cx="104" cy="108" r="9" fill="#d4a066"/><path d="M100,88 L120,80 V96 Z" fill="#3a2a30"/></svg></div>
<div class="tag" style="top:1361px">正常</div>
<div class="t td" style="left:1977.7px;width:200px;text-align:center;top:1372px">4</div>
<div class="t td" style="left:2017.7px;width:600px;text-align:center;top:1372px">2023-03-24 14:53:10</div>
<div class="t td" style="left:2377.6px;width:600px;text-align:center;top:1372px">2023-03-24 14:53:34</div>
<div class="be" style="top:1361px"><svg width="20" height="20" style="left:27px;top:14.5px"><path d="M9,1 H1 V18 H18 V9.5" stroke="#fff" stroke-width="1.7" fill="none"/><path d="M8,12.5 L17,3.5" stroke="#fff" stroke-width="3.6" stroke-linecap="round"/><path d="M8,12.5 L17,3.5" stroke="#5c9cf7" stroke-width="1" stroke-linecap="round"/></svg></div>
<div class="bd" style="top:1361px"><svg width="22" height="24" style="left:25px;top:13px"><path d="M0.5,5 H21.5 M7.5,4.5 V1 H14.5 V4.5 M3,5 L3.8,22 H18.2 L19,5 M8.5,9 V17.5 M13.5,9 V17.5" stroke="#fff" stroke-width="1.6" fill="none"/></svg></div>
<div class="row" style="top:1634.6px"></div>
<div class="t td" style="left:507px;width:200px;text-align:center;top:1539px">3</div>
<div class="t td" style="left:588px;width:600px;text-align:center;top:1539.5px">艺术</div>
<div class="thumb" style="top:1484.4px"><svg width="120" height="120" style="left:0;top:0"><rect width="120" height="120" fill="#ffffff"/>
<g stroke="#4a403c" stroke-width="1.6" fill="none"><rect x="33" y="10" width="4" height="4"/><rect x="40" y="6" width="10" height="11"/><rect x="53" y="10" width="4" height="4"/><rect x="60" y="6" width="10" height="11"/><rect x="73" y="10" width="4" height="4"/><rect x="80" y="6" width="10" height="11"/>
<path d="M39,20 l-2,2 M43,20 q3,3 6,0 M59,20 l-2,2 M63,20 q3,3 6,0 M79,20 l-2,2 M83,20 q3,3 6,0"/></g>
<path d="M38,44 L45,27 L52,34 Q60,32 70,34 L76,28 L82,46 Q88,60 89,80 Q90,96 88,106 L84,112 L78,108 H44 L38,112 L34,104 Q30,90 31,74 Q32,56 38,44 Z" fill="#fffdfb" stroke="#5a504c" stroke-width="1.3"/>
<path d="M38,44 Q33,70 34,104 L38,112 Q36,80 42,44 Z" fill="#f8e8d8"/>
<path d="M40,42 L45,27 L52,34 Z M82,46 L76,28 L72,35 Z" fill="#3a3230"/><path d="M46,32 L50,36 L46,38 Z M76,32 L73,36 L77,38 Z" fill="#f2c0b8"/>
<circle cx="46" cy="58" r="4.5" fill="#f4c4bc"/><circle cx="76" cy="58" r="4.5" fill="#f4c4bc"/>
<path d="M53,51 h2 M66,51 h2" stroke="#5a504c" stroke-width="1.2"/><path d="M56,61 q4,3 8,0 q4,3 8,0 M64,57 v4" stroke="#5a504c" stroke-width="1" fill="none"/>
<path d="M37,62 Q60,76 84,62" stroke="#5a504c" stroke-width="1.4" fill="none"/><path d="M58,69 l3,2 l3,-2 l0,4 l-3,-2 l-3,2 z" fill="#f0e090"/>
<ellipse cx="61" cy="92" rx="10" ry="11" fill="#fde9d6"/><path d="M46,80 Q50,96 58,98 M76,80 Q72,96 64,98 M41,82 Q44,94 56,100 M81,82 Q78,94 66,100" stroke="#5a504c" stroke-width="1" fill="none"/>
<path d="M86,49 l2,-2 l2,2 l-2,3 z" fill="#e86060"/><path d="M93,43 l1.5,-1.5 l1.5,1.5 l-1.5,2 z" fill="#f08080"/></svg></div>
<div class="tag" style="top:1528px">正常</div>
<div class="t td" style="left:1977.7px;width:200px;text-align:center;top:1539px">5</div>
<div class="t td" style="left:2017.7px;width:600px;text-align:center;top:1539px">2023-03-24 14:52:56</div>
<div class="t td" style="left:2377.6px;width:600px;text-align:center;top:1539px">2023-03-24 14:53:20</div>
<div class="be" style="top:1528px"><svg width="20" height="20" style="left:27px;top:14.5px"><path d="M9,1 H1 V18 H18 V9.5" stroke="#fff" stroke-width="1.7" fill="none"/><path d="M8,12.5 L17,3.5" stroke="#fff" stroke-width="3.6" stroke-linecap="round"/><path d="M8,12.5 L17,3.5" stroke="#5c9cf7" stroke-width="1" stroke-linecap="round"/></svg></div>
<div class="bd" style="top:1528px"><svg width="22" height="24" style="left:25px;top:13px"><path d="M0.5,5 H21.5 M7.5,4.5 V1 H14.5 V4.5 M3,5 L3.8,22 H18.2 L19,5 M8.5,9 V17.5 M13.5,9 V17.5" stroke="#fff" stroke-width="1.6" fill="none"/></svg></div>
<div class="row" style="top:1801.6px"></div>
<div class="t td" style="left:507px;width:200px;text-align:center;top:1706px">5</div>
<div class="t td" style="left:588px;width:600px;text-align:center;top:1706.5px">影视</div>
<div class="thumb" style="top:1651.4px"><svg width="120" height="120" style="left:0;top:0"><defs><linearGradient id="g7" x1="0" y1="0" x2="0" y2="1"><stop offset="0" stop-color="#58ac92"/><stop offset=".5" stop-color="#3f9a7e"/><stop offset="1" stop-color="#2e8a6e"/></linearGradient></defs>
<rect width="120" height="120" fill="url(#g7)"/><g fill="#8ed0b8" opacity=".45"><rect x="6" y="10" width="30" height="3"/><rect x="50" y="20" width="26" height="3"/><rect x="8" y="30" width="20" height="2"/><rect x="60" y="38" width="30" height="2"/></g>
<path d="M38,0 Q32,10 28,22 M46,0 Q56,12 62,20 M64,0 Q60,12 66,20 M70,4 Q80,2 70,32 M80,8 Q100,0 120,6" stroke="#2f7a2a" stroke-width="3" fill="none"/>
<path d="M0,66 L22,56 L40,72 L20,84 L0,84 Z" fill="#262220"/>
<ellipse cx="34" cy="72" rx="20" ry="13" fill="#f2f2f0"/><path d="M22,44 Q34,40 38,48 L34,62 L22,58 Z" fill="#2a2624"/>
<circle cx="14" cy="57" r="12" fill="#f4f4f2"/><ellipse cx="10" cy="54" rx="3.5" ry="3" fill="#1a1a1a"/><ellipse cx="19" cy="53" rx="3.5" ry="3" fill="#1a1a1a"/><circle cx="5" cy="46" r="3.5" fill="#1a1a1a"/><circle cx="23" cy="46" r="3.5" fill="#1a1a1a"/>
<path d="M30,70 L66,62 L72,86 L44,96 L36,92 Z" fill="#6e5030"/><path d="M16,84 L62,64 L66,72 L22,92 Z" fill="#6aa040"/><path d="M18,86 L62,67 M20,89 L64,70" stroke="#3f7a2a" stroke-width="1"/>
<circle cx="40" cy="93" r="6" fill="#2a2220"/><path d="M66,74 L74,72 L74,80 L68,80 Z" fill="#2a2220"/>
<path d="M44,52 Q52,46 60,50 L62,64 L46,66 Z" fill="#2a2624"/><circle cx="54" cy="52" r="7" fill="#f4f4f2"/><circle cx="51" cy="51" r="2" fill="#1a1a1a"/><circle cx="58" cy="51" r="2" fill="#1a1a1a"/><path d="M60,50 L66,42 L70,44 L64,54 Z" fill="#2a2624"/>
<ellipse cx="104" cy="62" rx="16" ry="13" fill="#4e7a3a"/><circle cx="104" cy="68" r="6" fill="#2a2220"/><circle cx="116" cy="52" r="10" fill="#f4f4f2"/><path d="M104,28 Q112,24 114,32 L112,44 L102,44 Z" fill="#2e2a26"/><path d="M100,44 Q110,40 120,42 V48 L100,52 Z" fill="#5a8aa0"/>
<path d="M74,96 Q80,88 90,90 L112,102 L110,112 L84,110 Z" fill="#2a2624"/><circle cx="97" cy="104" r="9" fill="#f4f4f2"/><circle cx="94" cy="102" r="2.2" fill="#1a1a1a"/><circle cx="101" cy="102" r="2.2" fill="#1a1a1a"/><path d="M76,96 Q86,90 92,92" stroke="#8ab040" stroke-width="1.5" fill="none"/></svg></div>
<div class="tag" style="top:1695px">正常</div>
<div class="t td" style="left:1977.7px;width:200px;text-align:center;top:1706px">6</div>
<div class="t td" style="left:2017.7px;width:600px;text-align:center;top:1706px">2023-03-24 14:53:00</div>
<div class="t td" style="left:2377.6px;width:600px;text-align:center;top:1706px">2023-03-24 14:53:25</div>
<div class="be" style="top:1695px"><svg width="20" height="20" style="left:27px;top:14.5px"><path d="M9,1 H1 V18 H18 V9.5" stroke="#fff" stroke-width="1.7" fill="none"/><path d="M8,12.5 L17,3.5" stroke="#fff" stroke-width="3.6" stroke-linecap="round"/><path d="M8,12.5 L17,3.5" stroke="#5c9cf7" stroke-width="1" stroke-linecap="round"/></svg></div>
<div class="bd" style="top:1695px"><svg width="22" height="24" style="left:25px;top:13px"><path d="M0.5,5 H21.5 M7.5,4.5 V1 H14.5 V4.5 M3,5 L3.8,22 H18.2 L19,5 M8.5,9 V17.5 M13.5,9 V17.5" stroke="#fff" stroke-width="1.6" fill="none"/></svg></div>
<div class="row" style="top:1968.6px"></div>
<div class="t td" style="left:507px;width:200px;text-align:center;top:1873px">7</div>
<div class="t td" style="left:588px;width:600px;text-align:center;top:1873.5px">动物</div>
<div class="thumb" style="top:1818.4px"><svg width="120" height="120" style="left:0;top:0"><defs><linearGradient id="g8" x1="0" y1="0" x2="0" y2="1"><stop offset="0" stop-color="#74b2e6"/><stop offset=".35" stop-color="#5c94d4"/><stop offset=".48" stop-color="#3e6a48"/><stop offset=".72" stop-color="#3a5a36"/><stop offset=".8" stop-color="#d8b838"/><stop offset="1" stop-color="#e8b830"/></linearGradient></defs>
<rect width="120" height="120" fill="url(#g8)"/><path d="M0,20 Q20,18 30,40 L30,50 H0 Z" fill="#4a7ac0" opacity=".6"/>
<circle cx="14" cy="96" r="12" fill="#f0d040"/><circle cx="110" cy="96" r="12" fill="#e8b030"/><path d="M8,64 Q14,60 18,70 L14,86 L8,82 Z" fill="#d8a0a0"/>
<path d="M24,24 L40,34 L30,52 Z M106,44 L92,38 L98,58 Z" fill="#e6b07c"/><path d="M28,30 L36,36 L32,46 Z" fill="#f0d0c0"/>
<path d="M22,60 Q22,30 60,28 Q98,30 100,58 Q104,84 88,96 L96,120 H22 L30,96 Q18,84 22,60 Z" fill="#f6ece0"/>
<path d="M26,50 Q32,30 60,28 Q90,30 96,52 Q86,46 76,48 Q62,40 46,48 Q34,46 26,50 Z" fill="#e2ac76"/><path d="M22,100 Q30,110 34,120 H22 Z M98,100 Q92,110 90,120 H98 Z" fill="#e2ac76"/>
<path d="M36,20 Q60,10 90,26 Q96,36 86,38 Q60,28 36,36 Q30,30 36,20 Z" fill="#e8d6aa"/><path d="M40,24 Q62,16 88,30" stroke="#cdb88a" stroke-width="1.2" fill="none"/>
<path d="M86,16 L96,28 L110,32 L106,44 L112,50 L104,54 L100,64 L94,50 Z" fill="#f0d028"/>
<ellipse cx="59" cy="61" rx="6" ry="5" fill="#141414"/><path d="M46,68 Q58,90 74,70 Q60,76 46,68 Z" fill="#241616"/><ellipse cx="60" cy="78" rx="6" ry="4" fill="#e890a0"/>
<path d="M44,52 q5,-2 9,0 M66,52 q5,-2 9,0" stroke="#5a4a40" stroke-width="1.5" fill="none"/><path d="M22,112 Q30,108 38,112 L36,120 H20 Z" fill="#6a6a6a"/></svg></div>
<div class="tag" style="top:1862px">正常</div>
<div class="t td" style="left:1977.7px;width:200px;text-align:center;top:1873px">7</div>
<div class="t td" style="left:2017.7px;width:600px;text-align:center;top:1873px">2023-03-24 14:53:05</div>
<div class="t td" style="left:2377.6px;width:600px;text-align:center;top:1873px">2023-03-24 14:53:29</div>
<div class="be" style="top:1862px"><svg width="20" height="20" style="left:27px;top:14.5px"><path d="M9,1 H1 V18 H18 V9.5" stroke="#fff" stroke-width="1.7" fill="none"/><path d="M8,12.5 L17,3.5" stroke="#fff" stroke-width="3.6" stroke-linecap="round"/><path d="M8,12.5 L17,3.5" stroke="#5c9cf7" stroke-width="1" stroke-linecap="round"/></svg></div>
<div class="bd" style="top:1862px"><svg width="22" height="24" style="left:25px;top:13px"><path d="M0.5,5 H21.5 M7.5,4.5 V1 H14.5 V4.5 M3,5 L3.8,22 H18.2 L19,5 M8.5,9 V17.5 M13.5,9 V17.5" stroke="#fff" stroke-width="1.6" fill="none"/></svg></div>
<div class="row" style="top:2135.6px"></div>
<div class="t td" style="left:507px;width:200px;text-align:center;top:2040px">8</div>
<div class="t td" style="left:588px;width:600px;text-align:center;top:2040.5px">绘画</div>
<div class="thumb" style="top:1985.4px"><svg width="120" height="120" style="left:0;top:0"><defs><linearGradient id="g9" x1="0" y1="0" x2="0" y2="1"><stop offset="0" stop-color="#86a2de"/><stop offset=".4" stop-color="#a8b8e4"/><stop offset=".6" stop-color="#c8cccc"/><stop offset="1" stop-color="#a8b4dc"/></linearGradient>
<radialGradient id="y9" cx=".6" cy=".5" r=".5"><stop offset="0" stop-color="#f0e4a0"/><stop offset="1" stop-color="#f0e4a0" stop-opacity="0"/></radialGradient></defs>
<rect width="120" height="120" fill="url(#g9)"/><ellipse cx="70" cy="54" rx="62" ry="14" fill="url(#y9)"/><rect x="60" y="65" width="60" height="3" fill="#e0b848"/><rect x="0" y="68" width="120" height="2" fill="#c8c0c0" opacity=".6"/>
<path d="M6,116 L26,92 H92 L110,108 L100,120 H0 Z" fill="#3c5cc4"/><rect x="70" y="108" width="6" height="12" fill="#2a48b0"/>
<path d="M5,75 Q50,82 102,76 L96,86 Q80,94 50,94 Q28,94 22,90 Z" fill="#3c72d8"/><path d="M10,77 Q50,84 102,76 L100,80 Q50,86 14,80 Z" fill="#b0682a"/>
<rect x="71" y="66" width="7" height="16" fill="#4a7ad8"/><rect x="21" y="70" width="3" height="10" fill="#3a6ac0"/>
<path d="M16,86 Q14,96 12,104 M98,80 Q104,90 104,104" stroke="#6a6a6a" stroke-width=".8" fill="none"/></svg></div>
<div class="tag" style="top:2029px">正常</div>
<div class="t td" style="left:1977.7px;width:200px;text-align:center;top:2040px">8</div>
<div class="t td" style="left:2017.7px;width:600px;text-align:center;top:2040px">2023-03-24 14:53:07</div>
<div class="t td" style="left:2377.6px;width:600px;text-align:center;top:2040px">2023-03-24 14:53:32</div>
<div class="be" style="top:2029px"><svg width="20" height="20" style="left:27px;top:14.5px"><path d="M9,1 H1 V18 H18 V9.5" stroke="#fff" stroke-width="1.7" fill="none"/><path d="M8,12.5 L17,3.5" stroke="#fff" stroke-width="3.6" stroke-linecap="round"/><path d="M8,12.5 L17,3.5" stroke="#5c9cf7" stroke-width="1" stroke-linecap="round"/></svg></div>
<div class="bd" style="top:2029px"><svg width="22" height="24" style="left:25px;top:13px"><path d="M0.5,5 H21.5 M7.5,4.5 V1 H14.5 V4.5 M3,5 L3.8,22 H18.2 L19,5 M8.5,9 V17.5 M13.5,9 V17.5" stroke="#fff" stroke-width="1.6" fill="none"/></svg></div>
<div class="thumb" style="top:2152px;background:#6b5a48"></div>
<!-- ROWS_END -->
<!-- STATUS BUBBLE -->
<div class="a" style="left:0;top:2118px;width:1278px;height:50px;background:#1f2020;border-radius:0 9px 0 0;box-shadow:0 0 14px rgba(0,0,0,.12);z-index:5"></div>
<div class="t" style="left:10px;top:2129px;font-size:25.6px;color:#e3e3e3;z-index:6">localhost:81/web/web</div>

</body></html>
